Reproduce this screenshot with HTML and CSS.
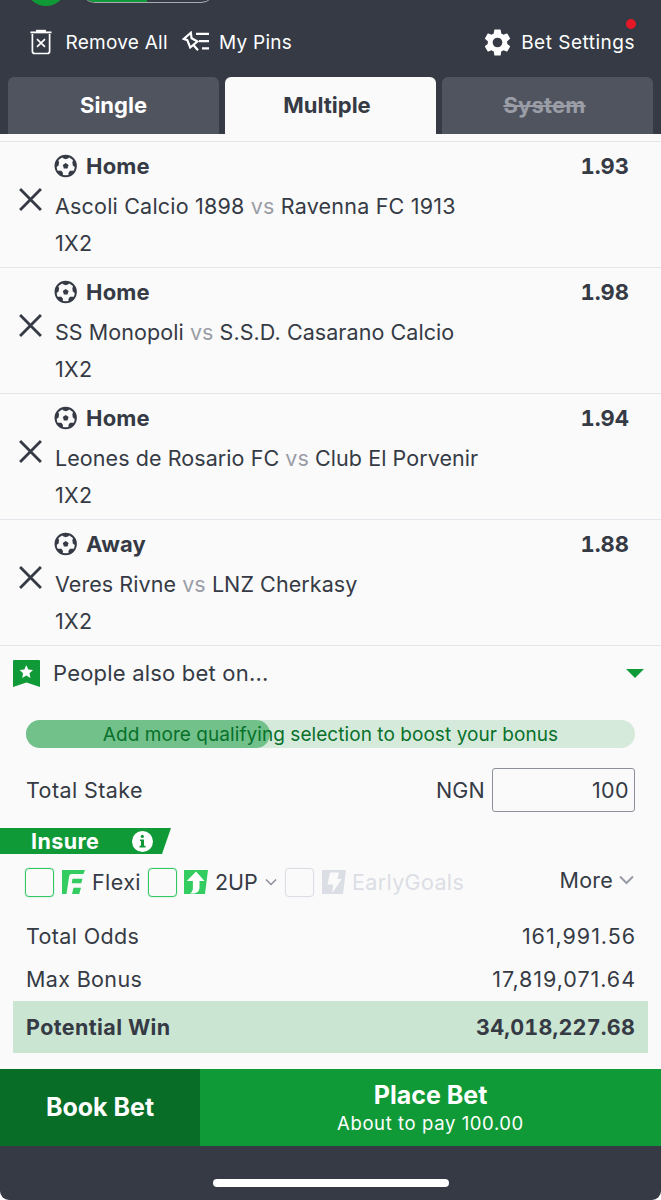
FILE: index.html
```html
<!DOCTYPE html>
<html lang="en">
<head>
<meta charset="utf-8">
<title>Betslip</title>
<link rel="stylesheet" href="styles.css">
</head>
<body>
<svg class="defs" aria-hidden="true">
  <symbol id="ball" viewBox="0 0 24 24">
    <circle cx="11.700" cy="12" r="10.200" fill="none" stroke="currentColor" stroke-width="1.900"/>
    <path fill="currentColor" d="M11.700 9l2.900 2.100-1.100 3.500H9.900l-1.100-3.500zM7.500 2h8.400l-1.500 2.300-2.700.9L9 4.300zM1.200 9l2-3 1.900 1.700-.5 3.900-2.700 2zM22.200 9l-2-3-1.900 1.700.5 3.900 2.700 2zM3.500 16.700l3.900.1 1.600 2.200-.3 3.200-4.200-2.400zM19.900 16.700l-3.900.1-1.600 2.200.3 3.200 4.200-2.400z"/>
  </symbol>
  <symbol id="cross" viewBox="0 0 24 24">
    <path d="M2 2l20 20M22 2L2 22" fill="none" stroke="currentColor" stroke-width="2.700"/>
  </symbol>
</svg>
<div class="screen">
  <header class="header">
    <div class="status"><span class="avatar"></span><span class="toggle"><span class="toggle-fill"></span></span></div>
    <nav class="actions">
      <svg class="icon-trash" viewBox="0 0 22 26" fill="none" stroke="#fff"><path d="M.5 3.400h21" stroke-width="1.900"/><path d="M6 2h10" stroke-width="2.400"/><path d="M2.400 5v17.200q0 2.300 2.300 2.300h12.600q2.300 0 2.300-2.300V5" stroke-width="1.700"/><path d="M7 10.200l8 7.600M15 10.200l-8 7.600" stroke-width="1.700"/></svg>
      <span class="remove">Remove All</span>
      <svg class="icon-pin" viewBox="0 0 28 22" fill="none" stroke="#fff"><path d="M8.800 1.700L1.800 7.900l3.500 1.300 2.900 7.300 7.200-6-5.800-3.200zM11.200 13.800l4.800 5.400" stroke-width="2.200"/><path d="M14 2.900h13M17 10.100h10M20 17.400h7" stroke-width="2.200"/></svg>
      <span class="pins">My Pins</span>
      <svg class="icon-gear" viewBox="2 2 20 20"><path fill="#fff" d="M19.140 12.940c.04-.3.06-.61.06-.94s-.02-.64-.07-.94l2.030-1.580a.49.49 0 0 0 .12-.61l-1.920-3.320a.488.488 0 0 0-.59-.22l-2.390.96c-.5-.38-1.030-.7-1.620-.94l-.36-2.540a.484.484 0 0 0-.48-.41h-3.840c-.24 0-.43.17-.47.41l-.36 2.540c-.59.24-1.130.57-1.620.94l-2.390-.96c-.22-.08-.47 0-.59.22L2.740 8.870c-.12.21-.08.47.12.61l2.030 1.580c-.05.3-.09.63-.09.94s.02.64.07.94l-2.030 1.580a.49.49 0 0 0-.12.61l1.920 3.320c.12.22.37.29.59.22l2.390-.96c.5.38 1.030.7 1.620.94l.36 2.540c.05.24.24.41.48.41h3.840c.24 0 .44-.17.47-.41l.36-2.540c.59-.24 1.130-.56 1.620-.94l2.390.96c.22.08.47 0 .59-.22l1.920-3.320a.49.49 0 0 0-.12-.61zM12 15.600a3.600 3.600 0 1 1 0-7.200 3.600 3.600 0 0 1 0 7.200z"/></svg>
      <span class="settings">Bet Settings<i class="dot"></i></span>
    </nav>
    <div class="tabs">
      <div class="tab">Single</div>
      <div class="tab active">Multiple</div>
      <div class="tab disabled"><s>System</s></div>
    </div>
  </header>

  <main class="bets">
    <article class="bet">
      <svg class="remove-bet"><use href="#cross"/></svg>
      <div class="bet-info">
        <div class="pick"><svg class="ball"><use href="#ball"/></svg><b>Home</b><b class="odds">1.93</b></div>
        <div class="match dated">Ascoli Calcio 1898 <span>vs</span> Ravenna FC 1913</div>
        <div class="market">1X2</div>
      </div>
    </article>
    <article class="bet">
      <svg class="remove-bet"><use href="#cross"/></svg>
      <div class="bet-info">
        <div class="pick"><svg class="ball"><use href="#ball"/></svg><b>Home</b><b class="odds">1.98</b></div>
        <div class="match">SS Monopoli <span>vs</span> S.S.D. Casarano Calcio</div>
        <div class="market">1X2</div>
      </div>
    </article>
    <article class="bet">
      <svg class="remove-bet"><use href="#cross"/></svg>
      <div class="bet-info">
        <div class="pick"><svg class="ball"><use href="#ball"/></svg><b>Home</b><b class="odds">1.94</b></div>
        <div class="match">Leones de Rosario FC <span>vs</span> Club El Porvenir</div>
        <div class="market">1X2</div>
      </div>
    </article>
    <article class="bet">
      <svg class="remove-bet"><use href="#cross"/></svg>
      <div class="bet-info">
        <div class="pick"><svg class="ball"><use href="#ball"/></svg><b>Away</b><b class="odds">1.88</b></div>
        <div class="match">Veres Rivne <span>vs</span> LNZ Cherkasy</div>
        <div class="market">1X2</div>
      </div>
    </article>
  </main>

  <section class="also">
    <svg class="icon-mark" viewBox="0 0 27 27"><path fill="#109a37" d="M1 0h25q1 0 1 1v26l-13.500-4.500L0 27V1q0-1 1-1z"/><path fill="#fff" d="M13.300 5.200l2 4.300 4.700.6-3.500 3.200.9 4.600-4.100-2.300-4.100 2.300.9-4.600-3.500-3.200 4.700-.6z"/></svg>
    <span class="also-text">People also bet on...</span>
    <svg class="caret" viewBox="0 0 18 9"><path fill="#109a37" d="M0 0h18L9 9z"/></svg>
  </section>

  <section class="boost"><span class="boost-fill"></span><span class="boost-text">Add more qualifying selection to boost your bonus</span></section>

  <section class="stake">
    <span class="stake-label">Total Stake</span><span class="currency">NGN</span><span class="amount">100</span>
  </section>

  <section class="insure">
    <span class="insure-text">Insure</span>
    <svg class="icon-info" viewBox="0 0 21 21"><circle cx="10.500" cy="10.500" r="10.500" fill="#fff"/><circle cx="10.300" cy="5.400" r="1.600" fill="#109a37"/><path fill="#109a37" d="M8 8.500h4v6.300h1.500v1.700h-6v-1.700H9v-4.700H8z"/></svg>
  </section>

  <section class="options">
    <span class="box"></span>
    <svg class="opt-icon flexi" viewBox="0 0 23 24"><path fill="#33cc60" d="M0 0h23l-1.500 4H9.500Q7.500 4 7.200 6L4.500 24H0zM10.500 8.700h10l-1.300 4.600H9.700zM11.500 17.700h7.500L17.200 24H10z"/></svg>
    <span class="opt-label flexi-label">Flexi</span>
    <span class="box"></span>
    <svg class="opt-icon up" viewBox="0 0 24 24"><path fill="#33cc60" d="M0 0h24l-3 24H0z"/><path fill="#fff" d="M12 1.500L20.500 11h-5v7q-.4 4.600-5.200 5.500H6q2.900-1.800 2.900-5.500v-7H2.800z"/></svg>
    <span class="opt-label up-label">2UP</span>
    <svg class="chev small" viewBox="0 0 12 8"><path d="M1 1.500l5 5 5-5" fill="none" stroke="#8b8e98" stroke-width="1.500"/></svg>
    <span class="box off"></span>
    <svg class="opt-icon early" viewBox="0 0 24 24"><path fill="#dcdee5" d="M0 0h24l-3 24H0z"/><path fill="#fafafa" d="M8 2.500h9l-1.500 6.500h4.200L10 23.500l1.200-9H5.500z"/></svg>
    <span class="opt-label off-label">EarlyGoals</span>
    <span class="more">More</span>
    <svg class="chev" viewBox="0 0 15 10"><path d="M1 1.500l6.500 6.500L14 1.500" fill="none" stroke="#989ba5" stroke-width="2"/></svg>
  </section>

  <dl class="totals">
    <div class="total"><dt>Total Odds</dt><dd>161,991.56</dd></div>
    <div class="total"><dt>Max Bonus</dt><dd>17,819,071.64</dd></div>
    <div class="total win"><dt>Potential Win</dt><dd>34,018,227.68</dd></div>
  </dl>

  <footer class="footer">
    <div class="book"><span>Book Bet</span></div>
    <div class="place"><strong>Place Bet</strong><small>About to pay 100.00</small></div>
  </footer>
  <div class="home"><span class="home-bar"></span></div>
</div>
</body>
</html>
```

FILE: styles.css
```css
* { box-sizing: border-box; }
body { margin: 0; background: #fff; font-family: Inter, "Liberation Sans", sans-serif; color: #353a45; }
.defs { position: absolute; width: 0; height: 0; }
.screen { width: 661px; height: 1200px; display: flex; flex-direction: column; overflow: hidden; background: #fafafa; border-radius: 0 0 9px 9px; white-space: nowrap; font-size: 21.500px; }
svg { display: block; flex: none; }

.header { height: 134px; background: #353a45; color: #fff; flex: none; }
.status { height: 22px; display: flex; align-items: flex-start; padding-left: 26px; }
.avatar { width: 40px; height: 40px; border-radius: 50%; background: #109a37; margin-top: -34px; }
.toggle { width: 136px; height: 30px; margin: -27px 0 0 14px; border: 1.500px solid #a8abb3; border-radius: 15px; overflow: hidden; }
.toggle-fill { display: block; width: 66px; height: 100%; background: #109a37; }
.actions { height: 40px; display: flex; align-items: center; padding-left: 30px; font-size: 19px; letter-spacing: .25px; }
.icon-trash { width: 22px; height: 26px; }
.remove { width: 117px; padding-left: 13.500px; }
.icon-pin { width: 28px; height: 22px; margin-left: 13px; }
.pins { margin-left: 9px; }
.icon-gear { width: 27px; height: 27px; margin-left: auto; }
.settings { position: relative; margin: 0 26px 0 10px; letter-spacing: .5px; }
.dot { position: absolute; right: -1px; top: -12px; width: 10px; height: 10px; border-radius: 50%; background: #e41827; }
.tabs { display: grid; grid-template-columns: repeat(3, 211px); gap: 6px; padding: 0 8px; margin-top: 15px; height: 57px; }
.tab { background: #50545f; border-radius: 6px 6px 0 0; text-align: center; line-height: 57px; font-weight: 700; font-size: 22px; }
.tab.active { background: #fafafa; color: #353a45; padding-right: 7px; }
.tab.disabled { color: #9a9da6; padding-right: 6px; letter-spacing: .2px; }

.bets { padding-top: 7px; flex: none; }
.bet { height: 126px; border-top: 1.500px solid #e5e6eb; display: flex; }
.remove-bet { width: 25px; height: 25px; margin: 45px 11px 0 18px; }
.bet-info { flex: 1; padding-right: 32px; }
.pick { display: flex; align-items: center; height: 39px; padding-top: 9px; font-size: 22px; font-variant-numeric: tabular-nums; }
.pick b { font-weight: 700; letter-spacing: .2px; }
.ball { width: 24px; height: 24px; margin-right: 8px; }
.pick .odds { margin-left: auto; letter-spacing: 0; }
.match, .market { padding-left: 1px; letter-spacing: .07px; }
.match { line-height: 26px; margin-top: 12px; }
.match.dated { letter-spacing: .2px; }
.match span { color: #9a9da6; }
.market { line-height: 26px; margin-top: 11px; letter-spacing: .3px; }

.also { height: 75px; border-top: 1.500px solid #e5e6eb; display: flex; align-items: flex-start; padding: 14px 17px 0 13px; flex: none; }
.icon-mark { width: 27px; height: 27px; }
.also-text { margin-left: 13px; line-height: 27px; font-size: 22px; letter-spacing: .2px; }
.caret { width: 18px; height: 9px; margin: 9px 0 0 auto; }
.boost { position: relative; height: 28px; margin: 0 26px; background: #d6eadb; border-radius: 14px; flex: none; text-align: center; font-size: 19px; line-height: 30px; color: #08702b; letter-spacing: .06px; }
.boost-fill { position: absolute; left: 0; top: 0; width: 244px; height: 28px; border-radius: 14px; background: #72c18a; }
.boost-text { position: relative; }
.stake { height: 44px; margin: 20px 26px 0; display: flex; align-items: center; flex: none; }
.stake-label { letter-spacing: .4px; }
.currency { margin-left: auto; letter-spacing: .2px; }
.amount { width: 143px; height: 44px; margin-left: 7px; border: 1.500px solid #8c909b; border-radius: 3px; text-align: right; padding-right: 5px; line-height: 42px; letter-spacing: .4px; }
.insure { width: 171px; height: 26px; margin-top: 16px; background: #109a37; clip-path: polygon(0 0, 100% 0, 162px 100%, 0 100%); display: flex; align-items: center; padding-left: 31px; flex: none; color: #fff; font-weight: 700; letter-spacing: .4px; }
.icon-info { width: 21px; height: 21px; margin-left: auto; margin-right: 18px; }

.options { height: 60px; display: flex; align-items: center; padding: 0 27px 4px 25px; flex: none; }
.box { width: 29px; height: 29px; border: 1.800px solid #33c763; border-radius: 4px; flex: none; box-shadow: 0 0 1px #33c763; }
.box.off { border-color: #dcdee5; box-shadow: 0 0 1px #dcdee5; }
.opt-icon { width: 24px; height: 24px; margin-left: 7px; }
.opt-icon.flexi { width: 23px; margin-left: 8px; }
.opt-icon.early { margin-left: 8px; }
.opt-label { margin-left: 7px; }
.flexi-label { width: 56px; letter-spacing: .4px; }
.up-label { width: 45px; }
.off-label { margin-left: 6px; color: #dcdee5; letter-spacing: .35px; }
.chev { width: 15px; height: 10px; margin-left: 6px; position: relative; top: -2px; }
.chev.small { width: 12px; height: 8px; margin: 0 8px 0 5px; top: 0; }
.more { margin-left: auto; position: relative; top: -2px; letter-spacing: .2px; }

.totals { margin: 0; padding: 0 13px; height: 155px; flex: none; }
.total { display: flex; justify-content: space-between; height: 43px; line-height: 44px; padding: 0 13px; letter-spacing: .35px; }
.total dd { margin: 0; letter-spacing: .95px; margin-right: -1px; }
.win { height: 52px; line-height: 52px; margin-top: 1px; background: #cae5d1; font-weight: 700; letter-spacing: .4px; }
.win dd { letter-spacing: .2px; margin-right: 0; font-variant-numeric: tabular-nums; }
.footer { height: 77px; display: flex; color: #fff; flex: none; }
.book { width: 200px; background: #086d27; display: flex; align-items: center; justify-content: center; font-weight: 700; font-size: 25px; padding-bottom: 2px; }
.place { flex: 1; background: #109a37; text-align: center; padding-top: 11px; }
.place strong { display: block; font-size: 25px; line-height: 31px; font-weight: 700; }
.place small { display: block; font-size: 18.500px; line-height: 25px; letter-spacing: .6px; }
.home { flex: 1; background: #353a45; display: flex; justify-content: center; padding-top: 33px; }
.home-bar { width: 236px; height: 8px; border-radius: 4px; background: #fff; }
```
